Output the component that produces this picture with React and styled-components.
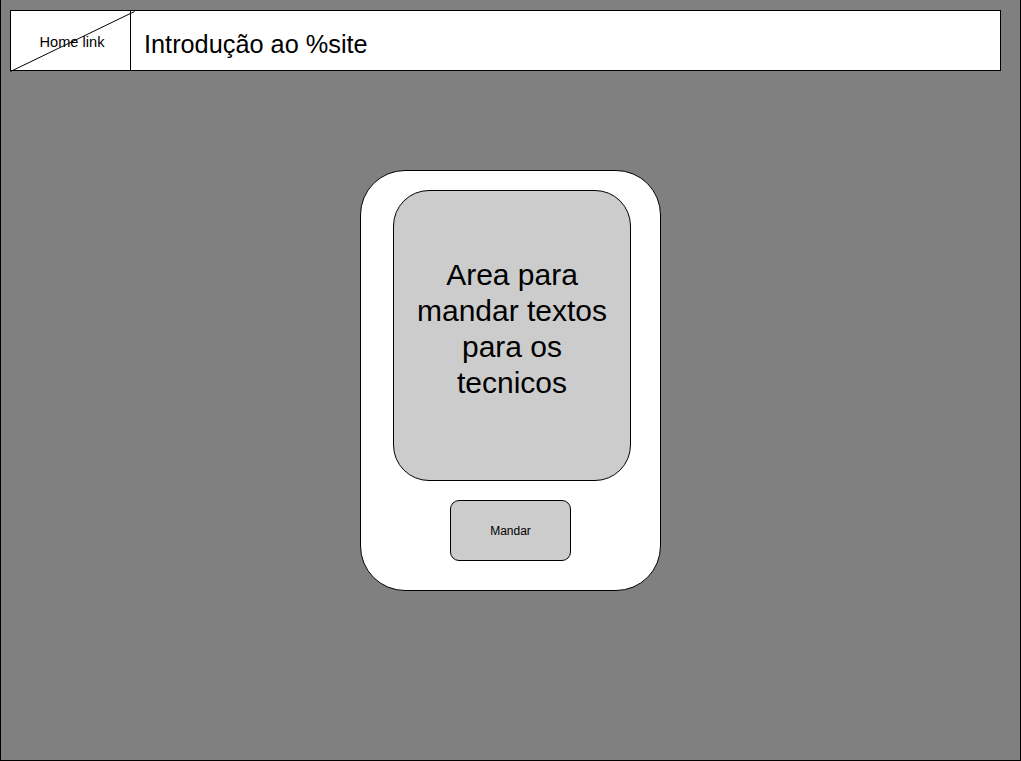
import React from "react";
import styled, { createGlobalStyle } from "styled-components";

const Global = createGlobalStyle`
  html, body { margin: 0; padding: 0; background: #808080; }
  body { font-family: "Liberation Sans", Arial, sans-serif; color: #000; }
  * { box-sizing: border-box; }
`;

const Page = styled.div`
  width: 1021px;
  height: 762px;
  margin-top: -1px;
  border: 1px solid #000;
  background: #808080;
  display: flex;
  flex-direction: column;
  align-items: center;
  padding-top: 10px;
  overflow: hidden;
`;

const Header = styled.header`
  position: relative;
  align-self: flex-start;
  margin-left: 9px;
  width: 991px;
  height: 61px;
  border: 1px solid #000;
  background: #fff;
  display: flex;
  align-items: stretch;
`;

const HomeCell = styled.a`
  width: 120px;
  flex: none;
  border-right: 1px solid #000;
  display: flex;
  align-items: center;
  justify-content: center;
  padding-left: 3px;
  padding-top: 2px;
  font-size: 14.6px;
  color: #000;
  text-decoration: none;
`;

const Title = styled.h1`
  margin: 0;
  padding-left: 13px;
  display: flex;
  align-items: center;
  font-size: 25.3px;
  font-weight: normal;
  padding-top: 8px;
`;

const Diagonal = styled.svg`
  position: absolute;
  left: -1px;
  top: -1px;
  overflow: visible;
  pointer-events: none;
`;

const Card = styled.section`
  margin-top: 99px;
  width: 301px;
  height: 421px;
  border: 1px solid #000;
  border-radius: 45px;
  background: #fff;
  display: flex;
  flex-direction: column;
  padding-top: 19px;
`;

const MessageArea = styled.div`
  margin-left: 32px;
  width: 238px;
  height: 291px;
  border: 1px solid #000;
  border-radius: 36px;
  background: #cccccc;
  display: flex;
  align-items: center;
  justify-content: center;
  text-align: center;
  padding: 0 18px 14px;
  font-size: 30px;
  line-height: 36px;
`;

const SendButton = styled.button`
  margin: 19px auto 0;
  width: 121px;
  height: 61px;
  border: 1px solid #000;
  border-radius: 9px;
  background: #cccccc;
  font-family: "Liberation Sans", Arial, sans-serif;
  font-size: 12px;
  color: #000;
  padding: 1px 0 0;
  cursor: pointer;
`;

export default function App() {
  return (
    <>
      <Global />
      <Page>
        <Header>
          <HomeCell href="#">Home link</HomeCell>
          <Title>Introdução ao %site</Title>
          <Diagonal width="126" height="62">
            <line x1="0.5" y1="61.5" x2="124.5" y2="1.5" stroke="#000" strokeWidth="1" />
          </Diagonal>
        </Header>
        <Card>
          <MessageArea>
            Area para mandar textos para os tecnicos
          </MessageArea>
          <SendButton>Mandar</SendButton>
        </Card>
      </Page>
    </>
  );
}
